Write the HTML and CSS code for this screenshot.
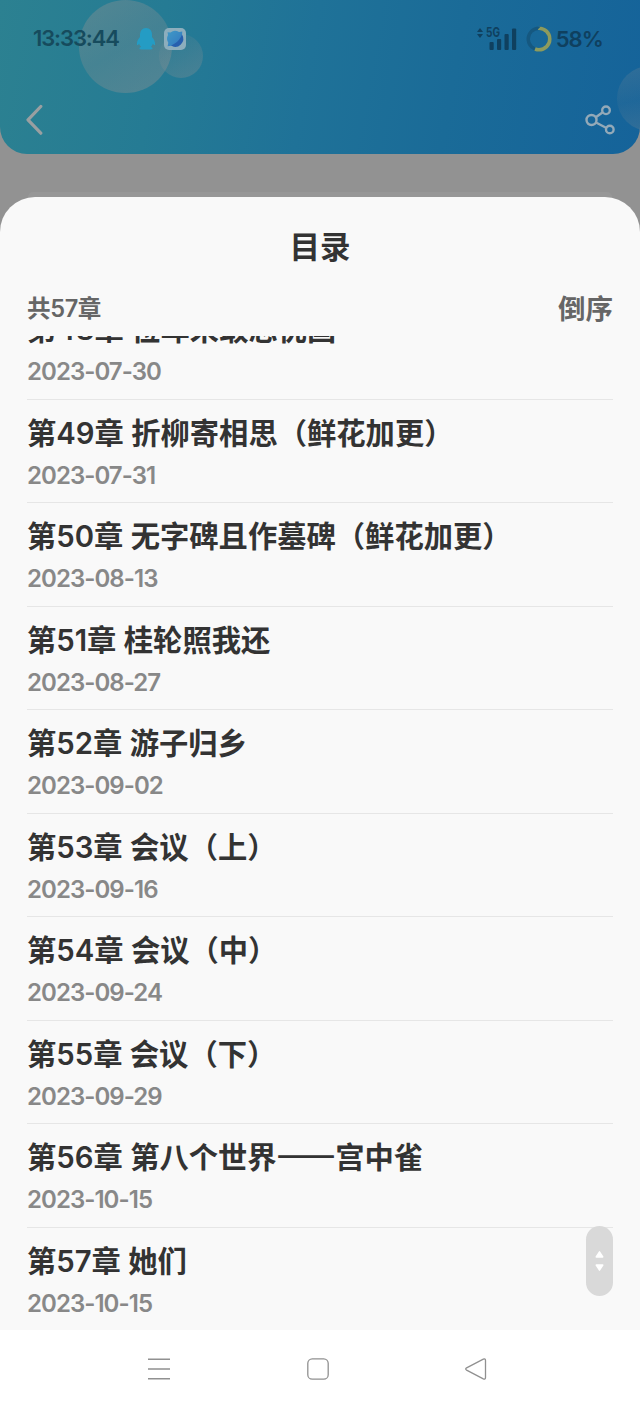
FILE: index.html
```html
<!DOCTYPE html>
<html lang="zh-CN">

<head>
    <meta charset="UTF-8">
    <meta name="viewport" content="width=device-width, initial-scale=1.0">
    <title>目录</title>

    <link rel="stylesheet" href="styles.css">
</head>

<body>
    <div class="header">
        <div class="bubble bubble-big"></div>
        <div class="bubble bubble-small"></div>
        <div class="bubble bubble-right"></div>

        <div class="status">
            <span class="time">13:33:44</span>
            <svg class="qq" width="20" height="22" viewBox="0 0 20 22">
                <path fill="#249cc4" d="M10 0C6 0 4 3 4 7v2C2 11 .7 14 .9 16.500c.1 1.200 1.200.7 2.300-.7.300 1.300 1 2.200 1.900 3-1 .5-1.700 1-1.700 1.600 0 .8 1.600 1.100 3.600 1.100h6c2 0 3.600-.3 3.600-1.100 0-.6-.7-1.100-1.700-1.600.9-.8 1.600-1.700 1.900-3 1.100 1.400 2.200 1.900 2.300.7C19.300 14 18 11 16 9V7c0-4-2-7-6-7z"/>
            </svg>
            <svg class="browser" width="22" height="22" viewBox="0 0 22 22">
                <defs>
                    <linearGradient id="globe" x1="0" y1="0" x2="1" y2="1">
                        <stop offset="0" stop-color="#4099c6"/>
                        <stop offset="1" stop-color="#3277c0"/>
                    </linearGradient>
                </defs>
                <rect width="22" height="22" rx="5" fill="#8daebd"/>
                <path fill="url(#globe)" d="M3.500 4.200l3 .2a7.600 7.600 0 0 1 8.500-.3l3.300-.5-.3 3.600a8 8 0 0 1-10.600 10.500l-3.800.5.7-3.500A7.600 7.600 0 0 1 4 7z"/>
                <path fill="#275fae" d="M18 6.600a8 8 0 0 1-11 11c4.500-1.600 9-5.600 11-11z"/>
            </svg>
            <div class="status-right">
                <svg width="40" height="24" viewBox="0 0 40 24">
                    <g fill="#0f405f">
                        <path d="M0 5l3-4 3 4zM0 7h6l-3 4z"/>
                        <text class="net" x="9" y="10.200" textLength="14" lengthAdjust="spacingAndGlyphs">5G</text>
                        <rect x="12.500" y="15" width="4.200" height="8" rx="1"/>
                        <rect x="20" y="12" width="4.200" height="11" rx="1"/>
                        <rect x="27.500" y="7" width="4.200" height="16" rx="1"/>
                        <rect x="35" y="1.500" width="4.200" height="21.500" rx="1"/>
                    </g>
                </svg>
                <svg class="ring" width="26" height="26" viewBox="0 0 26 26">
                    <circle cx="13" cy="13" r="10.800" fill="none" stroke="#155880" stroke-width="3.400"/>
                    <circle cx="13" cy="13" r="10.800" fill="none" stroke="#8c9b5e" stroke-width="3.600" pathLength="100" stroke-dasharray="56 44" transform="rotate(-90 13 13)"/>
                </svg>
                <span class="battery">58%</span>
            </div>
        </div>

        <div class="nav">
            <svg width="18" height="32" viewBox="0 0 18 32">
                <path d="M14.800 2.500L2 15.800l12.800 13.400" fill="none" stroke="#999fa1" stroke-width="3.200" stroke-linecap="round" stroke-linejoin="round"/>
            </svg>
            <svg width="30" height="30" viewBox="0 0 30 30">
                <g fill="none" stroke="#93a9b8" stroke-width="2.400">
                    <circle cx="6.500" cy="15" r="5"/>
                    <circle cx="21" cy="5.300" r="3.800"/>
                    <circle cx="24.800" cy="24.500" r="3.800"/>
                    <path d="M10.800 12.200l7-5M11 17.500l10 5.200"/>
                </g>
            </svg>
        </div>
    </div>

    <div class="card"></div>

    <div class="sheet">
        <h1 class="title">目录</h1>
        <div class="bar">
            <span class="total">共57章</span>
            <span class="order">倒序</span>
        </div>
        <div class="list">
            <div class="item">
                <div class="name">第48章 位卑未敢忘忧国</div>
                <div class="date">2023-07-30</div>
            </div>
            <div class="item">
                <div class="name">第49章 折柳寄相思（鲜花加更）</div>
                <div class="date">2023-07-31</div>
            </div>
            <div class="item">
                <div class="name">第50章 无字碑且作墓碑（鲜花加更）</div>
                <div class="date">2023-08-13</div>
            </div>
            <div class="item">
                <div class="name">第51章 桂轮照我还</div>
                <div class="date">2023-08-27</div>
            </div>
            <div class="item">
                <div class="name">第52章 游子归乡</div>
                <div class="date">2023-09-02</div>
            </div>
            <div class="item">
                <div class="name">第53章 会议（上）</div>
                <div class="date">2023-09-16</div>
            </div>
            <div class="item">
                <div class="name">第54章 会议（中）</div>
                <div class="date">2023-09-24</div>
            </div>
            <div class="item">
                <div class="name">第55章 会议（下）</div>
                <div class="date">2023-09-29</div>
            </div>
            <div class="item">
                <div class="name">第56章 第八个世界<span class="dash">——</span>宫中雀</div>
                <div class="date">2023-10-15</div>
            </div>
            <div class="item">
                <div class="name">第57章 她们</div>
                <div class="date">2023-10-15</div>
            </div>
        </div>
        <div class="thumb">
            <svg width="9" height="22" viewBox="0 0 9 22">
                <path d="M1.200 7L4.500 1.800 7.800 7zM1.200 15h6.600l-3.300 5.200z" fill="#fff" stroke="#fff" stroke-width="1.400" stroke-linejoin="round"/>
            </svg>
        </div>
    </div>

    <div class="keys">
        <svg width="22" height="22" viewBox="0 0 22 22">
            <path d="M0 1.200h22M0 11h22M0 20.800h22" stroke="#909090" stroke-width="1.600"/>
        </svg>
        <svg width="22" height="22" viewBox="0 0 22 22">
            <rect x=".8" y=".8" width="20.400" height="20.400" rx="4.500" fill="none" stroke="#909090" stroke-width="1.300"/>
        </svg>
        <svg width="22" height="22" viewBox="0 0 22 22">
            <path d="M1.600 9.900L18.300 1.200q2.200-.9 2.200 1.400v16.800q0 2.300-2.200 1.400L1.600 12.100q-1.800-1.100 0-2.200z" fill="none" stroke="#909090" stroke-width="1.300"/>
        </svg>
    </div>
</body>

</html>
```

FILE: styles.css
```css
* {
    box-sizing: border-box;
}

body {
    margin: 0;
    position: relative;
    width: 640px;
    height: 1408px;
    display: flex;
    flex-direction: column;
    overflow: hidden;
    background: #929292;
    font-family: Inter, "Noto Sans CJK SC", sans-serif;
}

svg {
    display: block;
    flex: none;
}

.header {
    position: relative;
    height: 154px;
    flex: none;
    overflow: hidden;
    border-radius: 0 0 27px 27px;
    background: linear-gradient(100deg, #2c8191 0%, #257b94 25%, #1f7298 48%, #1a6b98 70%, #15639a 100%);
}

.bubble {
    position: absolute;
    border-radius: 50%;
}

.bubble-big {
    left: 79px;
    top: 0;
    width: 93px;
    height: 93px;
    background: linear-gradient(150deg, rgba(147, 147, 147, .4), rgba(147, 147, 147, .28) 50%, rgba(147, 147, 147, .42));
}

.bubble-small {
    left: 159px;
    top: 34px;
    width: 44px;
    height: 44px;
    background: linear-gradient(150deg, rgba(147, 147, 147, .05), rgba(147, 147, 147, .34));
}

.bubble-right {
    left: 617px;
    top: 66px;
    width: 65px;
    height: 65px;
    background: linear-gradient(170deg, rgba(147, 147, 147, .22), rgba(147, 147, 147, .08) 50%, rgba(147, 147, 147, .26));
}

.status {
    position: relative;
    display: flex;
    align-items: center;
    height: 77px;
    padding: 0 37px 0 33px;
}

.time {
    width: 103px;
    font-size: 22px;
    font-weight: 600;
    letter-spacing: -1.1px;
    line-height: 24px;
    padding-bottom: 2px;
    color: #164b5d;
}

.browser {
    margin-left: 8px;
}

.status-right {
    display: flex;
    align-items: center;
    margin-left: auto;
}

.net {
    font-size: 13px;
    font-weight: 700;
}

.ring {
    margin: 0 4px 0 9px;
}

.battery {
    font-size: 22px;
    font-weight: 600;
    letter-spacing: -.9px;
    color: #0f405f;
}

.nav {
    display: flex;
    justify-content: space-between;
    align-items: center;
    height: 86px;
    padding: 0 25px 0 26px;
}

.card {
    height: 5px;
    flex: none;
    margin: 38px 28px 0;
    border-radius: 20px 20px 0 0;
    background: #979797;
}

.sheet {
    position: relative;
    display: flex;
    flex-direction: column;
    height: 1133px;
    flex: none;
    padding: 0 27px;
    border-radius: 35px 35px 0 0;
    background: #f9f9f9;
}

.title {
    margin: 0;
    padding-top: 30px;
    height: 86px;
    line-height: 40px;
    font-size: 30.5px;
    font-weight: 700;
    text-align: center;
    color: #333;
}

.bar {
    display: flex;
    justify-content: space-between;
    align-items: center;
    height: 53px;
    padding-bottom: 6px;
    color: #666;
    font-weight: 600;
}

.total {
    font-size: 23.6px;
    letter-spacing: -.4px;
}

.order {
    font-size: 27.5px;
}

.list {
    display: flex;
    flex-direction: column;
    justify-content: flex-end;
    height: 994px;
    overflow: hidden;
}

.item {
    flex: none;
    height: 103.5px;
    padding-top: 13px;
    border-bottom: 1px solid #e6e6e6;
}

.item:last-child {
    height: 102.5px;
    border-bottom: none;
}

.name {
    height: 42px;
    line-height: 42px;
    font-size: 29.3px;
    font-weight: 600;
    color: #333;
    white-space: nowrap;
}

/* stroke closes the gap between the two dashes */
.dash {
    font-family: "Noto Sans CJK SC", sans-serif;
    line-height: 1;
    -webkit-text-stroke: 1.4px #333;
}

.date {
    line-height: 41px;
    font-size: 24px;
    font-weight: 600;
    letter-spacing: -.95px;
    color: #888;
}

/* drag handle over the list */
.thumb {
    position: absolute;
    right: 27px;
    bottom: 34px;
    display: flex;
    align-items: center;
    justify-content: center;
    width: 27px;
    height: 70px;
    border-radius: 14px;
    background: #d9d9d9;
}

.keys {
    display: flex;
    justify-content: space-between;
    align-items: center;
    height: 78px;
    flex: none;
    padding: 0 153px 0 148px;
    background: #fff;
}
```
